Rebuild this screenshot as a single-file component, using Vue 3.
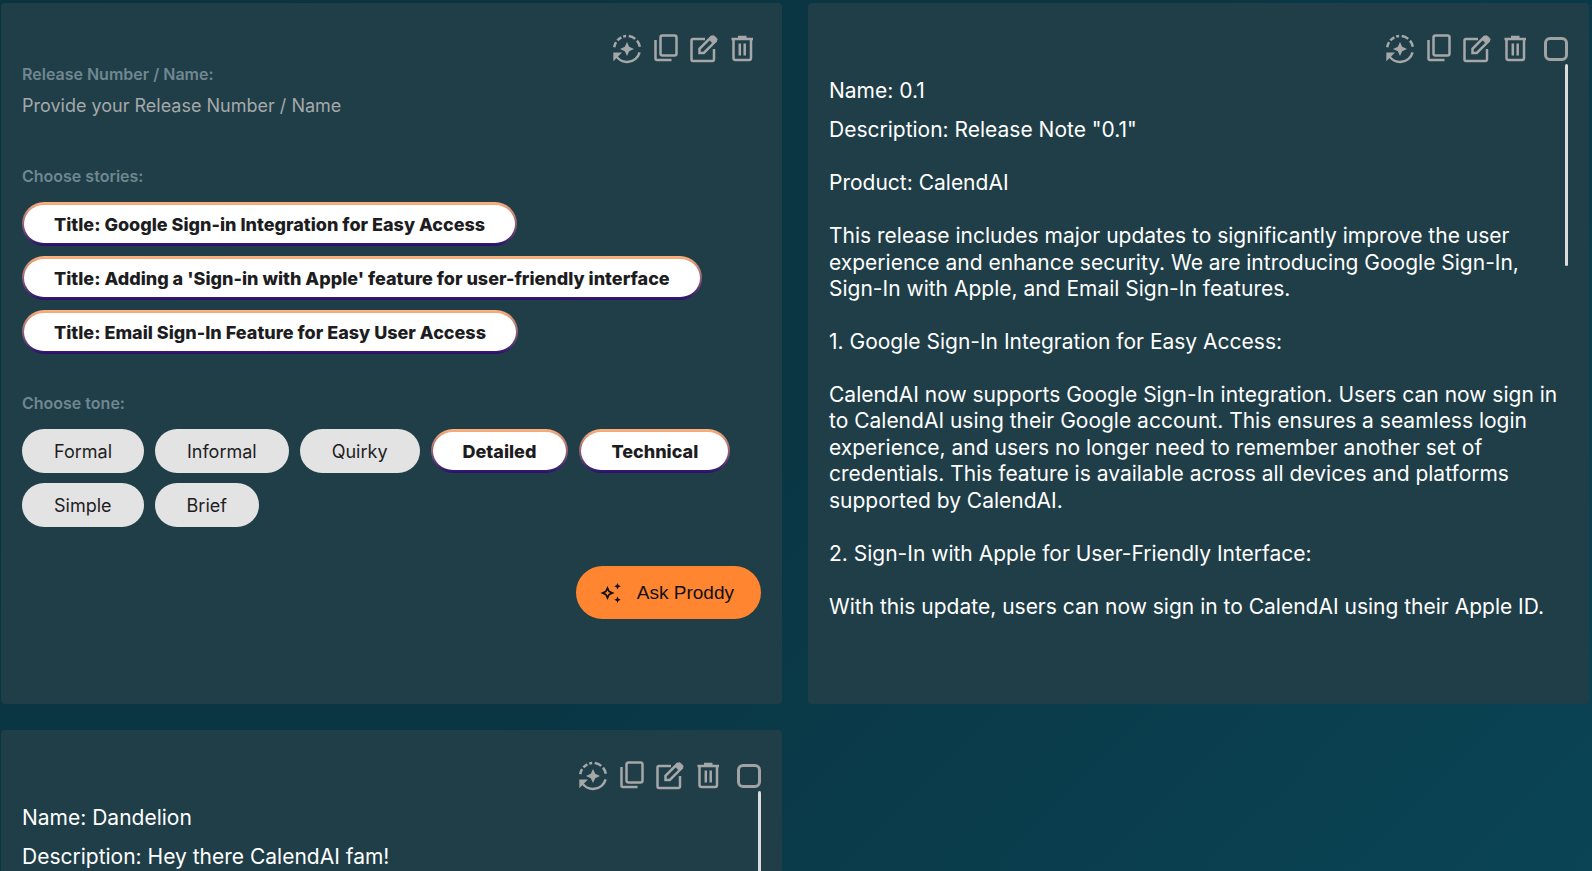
<script setup>
import { ref } from 'vue'

const releaseName = ref('')

const stories = ref([
  { label: "Title: Google Sign-in Integration for Easy Access", on: true },
  { label: "Title: Adding a 'Sign-in with Apple' feature for user-friendly interface", on: true },
  { label: "Title: Email Sign-In Feature for Easy User Access", on: true },
])

const tones = ref([
  { label: 'Formal', on: false },
  { label: 'Informal', on: false },
  { label: 'Quirky', on: false },
  { label: 'Detailed', on: true },
  { label: 'Technical', on: true },
  { label: 'Simple', on: false },
  { label: 'Brief', on: false },
])

const actions = [
  { id: 'regenerate', label: 'Regenerate' },
  { id: 'copy', label: 'Copy' },
  { id: 'edit', label: 'Edit' },
  { id: 'delete', label: 'Delete' },
]

const cards = [
  { id: 'form' },
  {
    id: 'note-01',
    name: '0.1',
    description: [
      'Release Note "0.1"',
      'Product: CalendAI',
      'This release includes major updates to significantly improve the user experience and enhance security. We are introducing Google Sign-In, Sign-In with Apple, and Email Sign-In features.',
      '1. Google Sign-In Integration for Easy Access:',
      'CalendAI now supports Google Sign-In integration. Users can now sign in to CalendAI using their Google account. This ensures a seamless login experience, and users no longer need to remember another set of credentials. This feature is available across all devices and platforms supported by CalendAI.',
      '2. Sign-In with Apple for User-Friendly Interface:',
      'With this update, users can now sign in to CalendAI using their Apple ID.',
    ],
  },
  { id: 'note-dandelion', name: 'Dandelion', description: ['Hey there CalendAI fam!'] },
]
</script>

<template>
  <main class="board">
    <article v-for="card in cards" :key="card.id" class="card">
      <div class="toolbar">
        <button v-for="a in actions" :key="a.id" type="button" class="tool" :aria-label="a.label">
          <svg v-if="a.id === 'regenerate'" class="icon" viewBox="1 0 30 30" fill="none" stroke="currentColor" stroke-width="2.5">
            <path d="M2.200 13.200A13 13 0 0 1 4.100 8.100M5.400 6.300A13 13 0 0 1 9.400 3.300M11.200 2.600A13 13 0 0 1 14.100 2M16.700 2.100A13 13 0 0 1 23.200 4.900M25 6.600A13 13 0 0 1 27.800 12.700" />
            <path d="M27.600 18.400A13 13 0 0 1 3.600 21" />
            <path d="M1.300 27.300V18.500H10Z" fill="currentColor" stroke="none" />
            <path d="M15 8L17.200 12.800L22 15L17.200 17.200L15 22L12.800 17.200L8 15L12.800 12.800Z" fill="currentColor" stroke="none" />
          </svg>
          <svg v-else-if="a.id === 'copy'" class="icon" viewBox="0 0 30 30" fill="none" stroke="currentColor" stroke-width="2.5">
            <rect x="9.500" y="1.500" width="16" height="20" rx="2" />
            <path d="M4.500 6V24.500A1.500 1.500 0 0 0 6 26H20.500" />
          </svg>
          <svg v-else-if="a.id === 'edit'" class="icon" viewBox="0 0 30 30" fill="none" stroke="currentColor" stroke-width="2.5">
            <path d="M16 5H4A1.500 1.500 0 0 0 2.500 6.500V25.500A1.500 1.500 0 0 0 4 27H23.500A1.500 1.500 0 0 0 25 25.500V15" />
            <path d="M10.500 19V14.800L22.200 3L26.500 7.300L14.800 19Z" />
            <path d="M20 5.300L23 2.200A2 2 0 0 1 25.500 2.200L27.600 4.300A2 2 0 0 1 27.600 6.800L24.200 9.500Z" fill="currentColor" stroke="currentColor" stroke-width="1" />
          </svg>
          <svg v-else class="icon" viewBox="0 0 30 30" fill="none" stroke="currentColor" stroke-width="2.500">
            <path d="M6.500 5V24A2 2 0 0 0 8.500 26H22A2 2 0 0 0 24 24V5" />
            <path d="M4.500 5H26M11 3H19.500" />
            <path d="M12.800 9.500V21.500M17.700 9.500V21.500" />
          </svg>
        </button>
        <input v-if="card.name" type="checkbox" class="pick" :aria-label="'Select ' + card.name" />
      </div>

      <div v-if="card.name" class="note">
        <div class="note-text">
          <p>Name: {{ card.name }}</p>
          <div class="description">
            <p v-for="(line, i) in card.description" :key="i">{{ i === 0 ? 'Description: ' + line : line }}</p>
          </div>
        </div>
        <span class="thumb"></span>
      </div>

      <form v-else class="form" @submit.prevent>
        <div class="field">
          <label class="caption" for="release">Release Number / Name:</label>
          <input id="release" v-model="releaseName" class="entry" type="text" placeholder="Provide your Release Number / Name" />
        </div>
        <div class="field" role="group" aria-labelledby="stories-caption">
          <span id="stories-caption" class="caption">Choose stories:</span>
          <div class="chips">
            <button v-for="s in stories" :key="s.label" type="button" class="chip" :class="{ on: s.on }" :aria-pressed="s.on" @click="s.on = !s.on">{{ s.label }}</button>
          </div>
        </div>
        <div class="field" role="group" aria-labelledby="tone-caption">
          <span id="tone-caption" class="caption">Choose tone:</span>
          <div class="chips">
            <button v-for="t in tones" :key="t.label" type="button" class="chip" :class="{ on: t.on }" :aria-pressed="t.on" @click="t.on = !t.on">{{ t.label }}</button>
          </div>
        </div>
        <button type="submit" class="ask">
          <svg class="spark" viewBox="0 0 24 24" fill="currentColor" aria-hidden="true">
            <path fill-rule="evenodd" d="M8.500 5L10.700 9.800L15.500 12L10.700 14.200L8.500 19L6.300 14.200L1.500 12L6.300 9.800ZM8.500 9.300L7.600 11.100L5.800 12L7.600 12.900L8.500 14.700L9.400 12.900L11.200 12L9.400 11.100Z" />
            <path d="M18.500 2L19.500 4.300L21.800 5.300L19.500 6.300L18.500 8.600L17.500 6.300L15.200 5.300L17.500 4.300ZM18.500 15.400L19.500 17.700L21.800 18.700L19.500 19.700L18.500 22L17.500 19.700L15.200 18.700L17.500 17.700Z" />
          </svg>
          Ask Proddy
        </button>
      </form>
    </article>
  </main>
</template>

<style>
body {
  margin: 0;
  background: #0a3644;
}
</style>

<style scoped>
.board {
  box-sizing: border-box;
  height: 100vh;
  overflow: hidden;
  display: grid;
  grid-template-columns: 1fr 1fr;
  grid-auto-rows: minmax(701px, auto);
  gap: 26px;
  padding: 3px 3px 0 1px;
  background: linear-gradient(135deg, #0a3340 0%, #0a3644 50%, #0a4455 100%);
  font-family: Inter, "Liberation Sans", sans-serif;
}
.card {
  box-sizing: border-box;
  display: flex;
  flex-direction: column;
  min-width: 0;
  padding: 31px 21px 40px;
  border-radius: 4px;
  background: #1f3e48;
}
.toolbar {
  display: flex;
  justify-content: flex-end;
  align-items: center;
  height: 30px;
}
.tool {
  width: 38px;
  height: 30px;
  padding: 0;
  border: 0;
  background: none;
  color: #a6a7a9;
  cursor: pointer;
}
.icon {
  display: block;
  width: 30px;
  height: 30px;
  margin: 0 auto;
}
.pick {
  appearance: none;
  box-sizing: border-box;
  width: 24px;
  height: 24px;
  margin: 0 0 0 10px;
  border: 3px solid #a0a2a4;
  border-radius: 6px;
}
.note {
  position: relative;
  flex: 1;
}
.note-text {
  padding: 14px 3px 0 0;
  color: #fff;
  font-size: 21px;
  line-height: 1.26;
}
.note-text p {
  margin: 0;
}
.description {
  display: grid;
  gap: 1.26em;
  margin-top: 13px;
}
.thumb {
  position: absolute;
  top: 0;
  right: 0;
  width: 3px;
  height: 202px;
  border-radius: 2px;
  background: #dcdcdc;
}
.form {
  display: flex;
  flex-direction: column;
  gap: 39px;
}
.field {
  display: flex;
  flex-direction: column;
}
.caption {
  color: #708790;
  font-size: 16px;
  font-weight: 600;
  line-height: 20px;
}
.entry {
  height: 24px;
  margin: 10px 0 9px;
  padding: 0;
  border: 0;
  outline: 0;
  background: none;
  color: #fff;
  font: 400 18px/24px Inter, "Liberation Sans", sans-serif;
}
.entry::placeholder {
  color: #a6a8aa;
  opacity: 1;
}
.chips {
  display: flex;
  flex-wrap: wrap;
  gap: 10px 11px;
  margin-top: 16px;
}
.chip {
  box-sizing: border-box;
  height: 44px;
  padding: 1px 30px 0;
  border: 2px solid transparent;
  border-width: 3px 2px;
  border-radius: 22px;
  background: #e3e3e3 border-box;
  color: #1d1d1f;
  font: 400 18px/24px Inter, "Liberation Sans", sans-serif;
  cursor: pointer;
}
.chip.on {
  background: linear-gradient(#fff, #fff) padding-box, linear-gradient(#ffb27a, #28106c) border-box;
  font-weight: 800;
}
.ask {
  display: flex;
  align-items: center;
  align-self: flex-end;
  gap: 14px;
  height: 53px;
  padding: 0 27px 0 23px;
  border: 0;
  border-radius: 27px;
  background: #ff8531;
  color: #111;
  font: 400 19px/24px "Liberation Sans", sans-serif;
  cursor: pointer;
}
.spark {
  width: 24px;
  height: 24px;
}
</style>
